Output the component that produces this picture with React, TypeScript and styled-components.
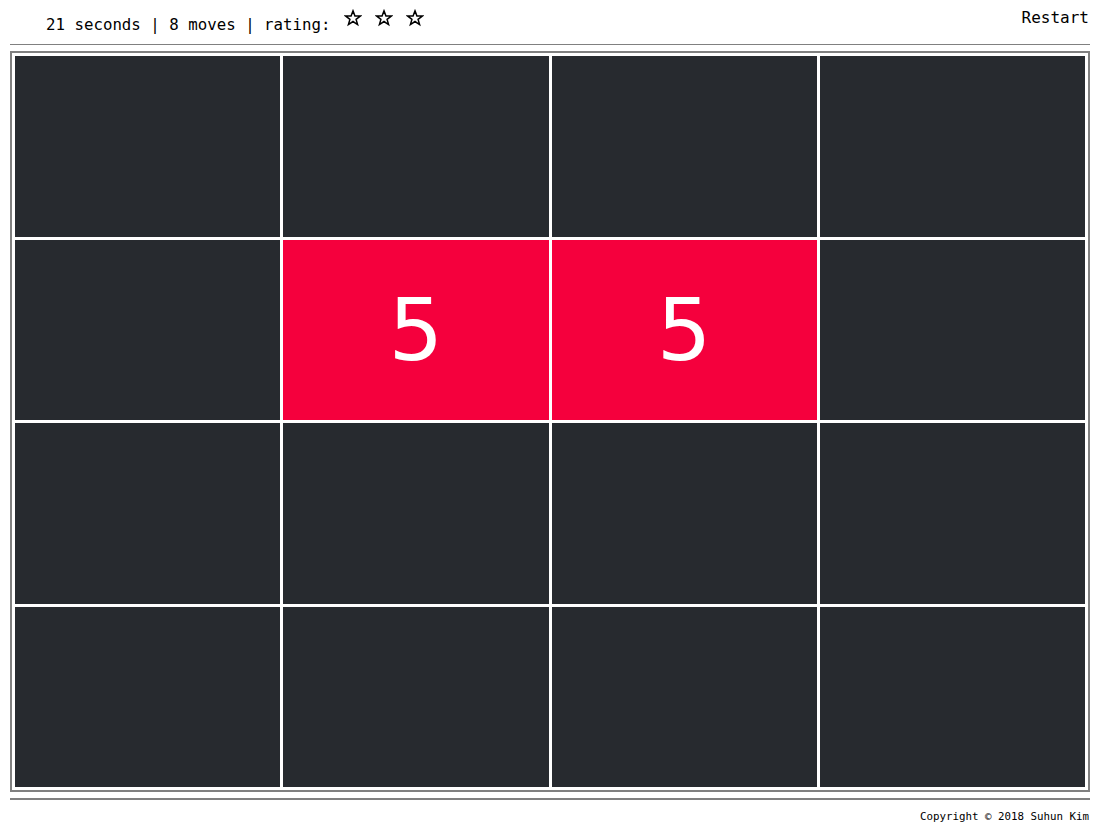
import React from "react";
import styled, { createGlobalStyle } from "styled-components";

const Global = createGlobalStyle`
  html, body { margin: 0; padding: 0; background: #fff; }
  body { font-family: "DejaVu Sans Mono", monospace; color: #000; }
`;

const Page = styled.div`
  width: 1080px;
  margin: 0 0 0 10px;
`;

const Header = styled.header`
  display: flex;
  justify-content: space-between;
  align-items: flex-start;
  height: 45px;
  border-bottom: 1px solid #808080;
  box-sizing: border-box;
`;

const Stats = styled.div`
  display: flex;
  align-items: flex-start;
  padding: 15px 0 0 36px;
  font-size: 15.75px;
  line-height: 20px;
  white-space: pre;
`;

const Stars = styled.span`
  display: inline-flex;
  gap: 13px;
  margin-left: 4px;
  margin-top: -6px;
`;

const StarIcon = () => (
  <svg width="18" height="18" viewBox="0 0 24 24" fill="none" stroke="#000" strokeWidth="2" strokeLinejoin="miter">
    <polygon points="12,2.5 14.6,9.3 21.8,9.4 16.1,13.8 18.1,20.8 12,16.7 5.9,20.8 7.9,13.8 2.2,9.4 9.4,9.3" />
  </svg>
);

const Restart = styled.button`
  background: none;
  border: none;
  padding: 8px 1px 0 0;
  font-family: "DejaVu Sans Mono", monospace;
  font-size: 16px;
  line-height: 20px;
  color: #000;
  cursor: pointer;
`;

const Board = styled.div`
  margin-top: 6px;
  border: 2px solid #808080;
  padding: 3px;
  display: grid;
  grid-template-columns: repeat(4, 1fr);
  grid-auto-rows: 180.5px;
  gap: 3px;
`;

const Card = styled.div<{ $open?: boolean }>`
  background: ${(p) => (p.$open ? "#f5003d" : "#272a2f")};
  color: #fff;
  display: flex;
  align-items: center;
  justify-content: center;
  font-family: "DejaVu Sans", sans-serif;
  font-size: 86px;
`;

const Footer = styled.footer`
  margin-top: 6px;
  border-top: 2px solid #808080;
  text-align: right;
  font-size: 10.8px;
  padding-top: 10px;
  padding-right: 1px;
`;

const cards = Array.from({ length: 16 }, (_, i) => (i === 5 || i === 6 ? "5" : ""));

export default function App() {
  return (
    <>
      <Global />
      <Page>
        <Header>
          <Stats>
            {"21 seconds | 8 moves | rating: "}
            <Stars>
              <StarIcon />
              <StarIcon />
              <StarIcon />
            </Stars>
          </Stats>
          <Restart>Restart</Restart>
        </Header>
        <Board>
          {cards.map((c, i) => (
            <Card key={i} $open={!!c}>
              {c}
            </Card>
          ))}
        </Board>
        <Footer>Copyright © 2018 Suhun Kim</Footer>
      </Page>
    </>
  );
}
